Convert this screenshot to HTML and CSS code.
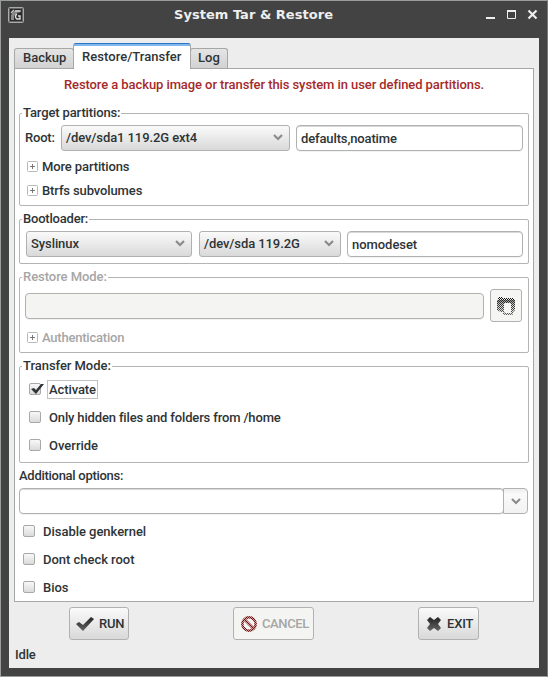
FILE: index.html
```html
<!DOCTYPE html>
<html lang="en">
<head>
<meta charset="utf-8">
<title>System Tar &amp; Restore</title>
<link rel="stylesheet" href="styles.css">
</head>
<body>
<div class="window">
  <header class="titlebar">
    <svg class="app-icon" width="16" height="16" viewBox="0 0 16 16"><rect x=".5" y=".5" width="15" height="15" rx="1" fill="#2b2b2b" stroke="#aaa"/><rect x="1.5" y="1.500" width="13" height="13" fill="none" stroke="#666"/><path d="M3 13V8l2-3 3-2h5v2L9 6 6 9v4z" fill="#8a8a8a"/><path d="M3 6l3-3M7 4h5" stroke="#ccc" stroke-width="1.300"/><path d="M9 7c-2 1-2 4 0 5h3V9h-2" fill="none" stroke="#ddd" stroke-width="1.400"/></svg>
    <h1>System Tar &amp; Restore</h1>
    <svg class="controls" width="52" height="12" viewBox="0 0 52 12"><path d="M0 9h9v2H0z" fill="#eee"/><path d="M21.500 2.500h8v8h-8z" fill="none" stroke="#eee"/><path d="M21 2h9v2h-9z" fill="#eee"/><path d="M42.500 2.500l8 8m0-8l-8 8" stroke="#eee" stroke-width="2.200"/></svg>
  </header>
  <main class="content">
    <nav class="tabs"><div class="tab backup">Backup</div><div class="tab active">Restore/Transfer</div><div class="tab log">Log</div></nav>
    <div class="page">
      <p class="notice">Restore a backup image or transfer this system in user defined partitions.</p>
      <section class="group target">
        <h2>Target partitions:</h2>
        <div class="row root-row"><span class="root-label">Root:</span><div class="select root">/dev/sda1 119.2G ext4<svg width="10" height="7" viewBox="0 0 10 7"><path d="M1 1l4 4 4-4"/></svg></div><div class="entry options">defaults,noatime</div></div>
        <div class="expander"><svg width="11" height="11" viewBox="0 0 11 11"><rect x=".5" y=".5" width="10" height="10" rx="1"/><path d="M3 5.500h5M5.500 3v5"/></svg>More partitions</div>
        <div class="expander"><svg width="11" height="11" viewBox="0 0 11 11"><rect x=".5" y=".5" width="10" height="10" rx="1"/><path d="M3 5.500h5M5.500 3v5"/></svg>Btrfs subvolumes</div>
      </section>
      <section class="group bootloader">
        <h2>Bootloader:</h2>
        <div class="row boot-row"><div class="select loader">Syslinux<svg width="10" height="7" viewBox="0 0 10 7"><path d="M1 1l4 4 4-4"/></svg></div><div class="select disk">/dev/sda 119.2G<svg width="10" height="7" viewBox="0 0 10 7"><path d="M1 1l4 4 4-4"/></svg></div><div class="entry kernel">nomodeset</div></div>
      </section>
      <section class="group restore disabled">
        <h2>Restore Mode:</h2>
        <div class="row file-row"><div class="entry file"></div><div class="button browse"><svg width="18" height="18" viewBox="0 0 18 18"><defs><pattern id="dots" width="2" height="2" patternUnits="userSpaceOnUse"><path d="M0 0h1v1H0zM1 1h1v1H1z" fill="#111"/></pattern><linearGradient id="shade" x1="0" y1="0" x2="0" y2="1"><stop offset="0" stop-color="#333" stop-opacity=".55"/><stop offset=".35" stop-color="#888" stop-opacity=".3"/><stop offset="1" stop-color="#ddd" stop-opacity=".4"/></linearGradient></defs><path d="M1 0h5v1h11v2H1z" fill="url(#dots)"/><path d="M0 3h18v10l-2 2v2l-1 1H8l-2-1v-2H4l-4-2z" fill="url(#dots)"/><path d="M0 3h18v10l-2 2v2l-1 1H8l-2-1v-2H4l-4-2z" fill="url(#shade)"/><path d="M8 6h5l1 1v9H8l-1-1V7z" fill="#f5f5f4"/></svg></div></div>
        <div class="expander"><svg width="11" height="11" viewBox="0 0 11 11"><rect x=".5" y=".5" width="10" height="10" rx="1"/><path d="M3 5.500h5M5.500 3v5"/></svg>Authentication</div>
      </section>
      <section class="group transfer">
        <h2>Transfer Mode:</h2>
        <div class="check"><span class="box"><svg width="14" height="12" viewBox="0 0 14 12"><path d="M1 6l3-1 2 2 5-6h3L6 11z" fill="#2e3436"/></svg></span><span class="focused">Activate</span></div>
        <div class="check"><span class="box"></span><span class="label hidden-files">Only hidden files and folders from /home</span></div>
        <div class="check"><span class="box"></span><span class="label">Override</span></div>
      </section>
      <p class="additional">Additional options:</p>
      <div class="combo"><div class="entry extra"></div><div class="drop"><svg width="10" height="7" viewBox="0 0 10 7"><path d="M1 1l4 4 4-4"/></svg></div></div>
      <div class="flags">
        <div class="check"><span class="box"></span><span class="label">Disable genkernel</span></div>
        <div class="check"><span class="box"></span><span class="label">Dont check root</span></div>
        <div class="check"><span class="box"></span><span class="label">Bios</span></div>
      </div>
    </div>
    <div class="actions">
      <div class="button run"><svg width="18" height="14" viewBox="0 0 18 14"><defs><linearGradient id="ink" x1="0" y1="0" x2="0" y2="1"><stop stop-color="#222"/><stop offset="1" stop-color="#666"/></linearGradient></defs><path d="M0 7l3-2 4 3 8-8 3 2L7 14z" fill="url(#ink)"/></svg>RUN</div>
      <div class="button cancel disabled"><svg width="16" height="16" viewBox="0 0 16 16"><defs><pattern id="reddots" width="2" height="2" patternUnits="userSpaceOnUse"><path d="M0 0h2v2H0z" fill="#d39a98"/><path d="M0 0h1v1H0zM1 1h1v1H1z" fill="#671515"/></pattern></defs><circle cx="8" cy="8" r="6.700" fill="none" stroke="url(#reddots)" stroke-width="2.500"/><path d="M3.500 3.500l9 9" stroke="url(#reddots)" stroke-width="2.600"/></svg>CANCEL</div>
      <div class="button exit"><svg width="14" height="14" viewBox="0 0 14 14"><path d="M3 0l4 3 4-3 3 3-3 4 3 4-3 3-4-3-4 3-3-3 3-4-3-4z" fill="url(#ink)"/></svg>EXIT</div>
    </div>
    <footer>Idle</footer>
  </main>
</div>
</body>
</html>
```
FILE: styles.css
```css
* { box-sizing: border-box; }
body { margin: 0; font: 500 13px/16px Roboto, sans-serif; color: #2e3436; }
h1, h2, p { margin: 0; font-size: inherit; font-weight: inherit; }
svg { display: block; flex: none; }
.window { width: 548px; height: 677px; border: 1px solid #9a9e9b; border-right-color: #767876; background: #434343; padding: 0 8px; }
.titlebar { height: 37px; display: flex; align-items: flex-start; }
.app-icon { margin: 6px 0 0 -1px; }
h1 { font: bold 13px/16px "DejaVu Sans", sans-serif; color: #eee; margin: 6px 0 0 150px; width: 160px; white-space: nowrap; letter-spacing: .03px; }
.controls { margin: 7px 0 0 152px; }
.content { height: 630px; background: #ededed; padding: 5px 5px 0; }
.tabs { height: 25px; display: flex; align-items: flex-end; }
.tab { height: 20px; padding: 1px 0 0 8px; border: 1px solid #a5a8a5; border-bottom: 0; border-radius: 3px 3px 0 0; background: linear-gradient(#e5e5e5, #d2d2d2); }
.backup { width: 60px; }
.active { position: relative; width: 118px; height: 26px; margin: 0 0 -1px -1px; padding-top: 5px; border-top-color: #2a76c6; background: linear-gradient(#82b7eb 0 2px, #fff 2px); letter-spacing: .05px; }
.log { width: 38px; margin-left: -1px; padding-left: 7px; }
.page { height: 534px; border: 1px solid #a5a8a5; background: #fff; padding: 8px 4px 0; }
.notice { color: #a52a2a; text-align: center; white-space: nowrap; height: 36px; letter-spacing: -.085px; }
.group { width: 510px; border: 1px solid #b3b5b3; border-radius: 2px; margin-bottom: 13px; }
.group h2 { width: max-content; height: 16px; margin: -9px 0 0 2px; padding: 0 1px; background: #fff; letter-spacing: -.05px; }
.target { height: 93px; }
.target h2 { letter-spacing: -.13px; }
.bootloader { height: 45px; }
.bootloader h2 { letter-spacing: -.2px; }
.restore { height: 76px; }
.transfer { height: 97px; margin-bottom: 5px; }
.row { display: flex; align-items: center; }
.root-row { margin: 4px 0 0 5px; height: 26px; }
.root-label { width: 36px; letter-spacing: -.2px; }
.select { height: 26px; display: flex; align-items: center; justify-content: space-between; padding: 0 5px 0 4px; border: 1px solid #b0b2b0; border-radius: 3px; background: linear-gradient(#fafafa, #d9d9d9); white-space: nowrap; letter-spacing: -.09px; }
.select path, .drop path { fill: none; stroke: #8b8c89; stroke-width: 2.2; }
.select svg { margin-top: -2px; margin-right: 1px; }
.root { width: 229px; }
.entry { height: 26px; border: 1px solid #b0b2b0; border-radius: 4px; padding: 5px 4px; background: #fff; box-shadow: inset 0 1px #d8d8d8, 0 1px #f3f3f3; white-space: nowrap; letter-spacing: -.13px; }
.options { width: 227px; margin-left: 6px; }
.kernel { letter-spacing: -.05px; }
.expander { height: 24px; display: flex; align-items: center; margin-left: 7px; gap: 4px; letter-spacing: -.12px; }
.expander svg { margin-top: -2px; }
.target .root-row + .expander { margin-top: 4px; }
.expander rect { fill: #fff; stroke: #b9bbb9; }
.expander path { stroke: #777; }
.boot-row { height: 26px; margin: 4px 0 0 6px; }
.loader { width: 166px; }
.disk { width: 142px; margin-left: 7px; }
.kernel { width: 176px; margin-left: 6px; }
.disabled { color: #a6a6a6; }
.file-row { height: 33px; margin: 4px 0 0 5px; }
.file { width: 459px; background: #f4f4f2; box-shadow: 0 1px #f3f3f3; }
.button { height: 33px; display: flex; align-items: center; border: 1px solid #b0b2b0; border-radius: 3px; background: linear-gradient(#fafafa, #d9d9d9); }
.browse { width: 32px; margin-left: 6px; padding-top: 1px; justify-content: center; background: #f5f5f4; }
.restore .expander { margin-top: 4px; letter-spacing: -.22px; }
.check { display: flex; align-items: center; height: 28px; white-space: nowrap; }
.box { width: 12px; height: 12px; margin: 0 8px 0 0; border: 1px solid #a7a9a7; border-radius: 2px; background: linear-gradient(#f8f8f8, #dadada); }
.box svg { margin: -1px 0 0; overflow: visible; }
.transfer .check { margin-left: 9px; }
.transfer h2 { margin-bottom: 1px; }
.focused { width: 51px; height: 19px; line-height: 17px; margin: 0 0 0 -2px; padding: 0 1px; border: 1px solid #c2c2c2; letter-spacing: -.1px; }
.label { padding-top: 1px; }
.hidden-files { letter-spacing: -.15px; }
.additional { height: 20px; letter-spacing: -.28px; }
.combo { display: flex; }
.extra { width: 485px; }
.drop { width: 25px; height: 26px; display: grid; place-items: center; margin-left: -1px; border: 1px solid #b0b2b0; border-radius: 0 4px 4px 0; background: linear-gradient(#ececec, #fafafa 5px, #f2f2f2); }
.flags { margin: 3px 0 0 4px; letter-spacing: -.03px; }
.actions { display: flex; height: 38px; padding-top: 5px; }
.run { width: 60px; margin-left: 55px; padding-left: 6px; gap: 5px; letter-spacing: -.2px; }
.cancel { width: 81px; margin-left: 104px; padding-left: 7px; gap: 5px; background: #f4f4f3; letter-spacing: -.4px; }
.exit { width: 61px; margin-left: 104px; padding-left: 8px; gap: 6px; letter-spacing: -.15px; }
footer { padding: 7px 0 0 1px; letter-spacing: -.15px; }
```
